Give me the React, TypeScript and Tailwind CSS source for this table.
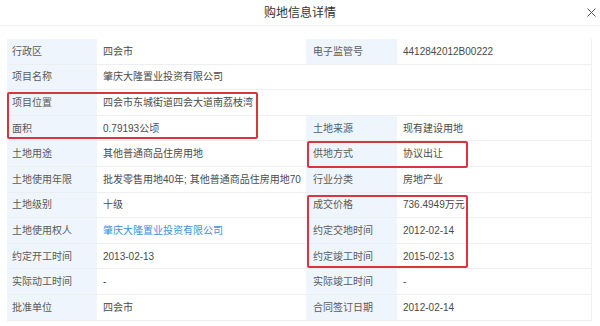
const rows: { l: string; v: string; l2?: string; v2?: string; link?: boolean }[] = [
  { l: '行政区', v: '四会市', l2: '电子监管号', v2: '4412842012B00222' },
  { l: '项目名称', v: '肇庆大隆置业投资有限公司' },
  { l: '项目位置', v: '四会市东城街道四会大道南荔枝湾' },
  { l: '面积', v: '0.79193公顷', l2: '土地来源', v2: '现有建设用地' },
  { l: '土地用途', v: '其他普通商品住房用地', l2: '供地方式', v2: '协议出让' },
  { l: '土地使用年限', v: '批发零售用地40年; 其他普通商品住房用地70', l2: '行业分类', v2: '房地产业' },
  { l: '土地级别', v: '十级', l2: '成交价格', v2: '736.4949万元' },
  { l: '土地使用权人', v: '肇庆大隆置业投资有限公司', l2: '约定交地时间', v2: '2012-02-14', link: true },
  { l: '约定开工时间', v: '2013-02-13', l2: '约定竣工时间', v2: '2015-02-13' },
  { l: '实际动工时间', v: '-', l2: '实际竣工时间', v2: '-' },
  { l: '批准单位', v: '四会市', l2: '合同签订日期', v2: '2012-02-14' },
];

export default function App() {
  return (
    <div
      className="w-[600px] h-[326px] overflow-hidden bg-white text-[#4a4a4a]"
      style={{ fontFamily: '"Liberation Sans", "Noto Sans CJK SC", sans-serif' }}
    >
      <div className="relative h-[26px] border-b border-[#f0f0f0] flex items-center justify-center">
        <span className="text-[12px] text-[#333]">购地信息详情</span>
        <svg className="absolute right-[4px] top-[8px]" width="9" height="9" viewBox="0 0 9 9">
          <path d="M0.5 0.5L8.5 8.5M8.5 0.5L0.5 8.5" stroke="#555" strokeWidth="1" />
        </svg>
      </div>
      <div className="relative ml-[7px] mt-[13px] w-[585px]">
        <div className="border-r border-[#f0f0f0]">
          {rows.map((r) => (
            <div
              key={r.l}
              className="grid grid-cols-[90px_209px_91px_195px] h-[25.6px] border-b border-[#eceff2] text-[10px]"
            >
              <div className="bg-[#eef5fc] flex items-center pl-[5px] text-[#5a5a5a]">{r.l}</div>
              {r.l2 ? (
                <>
                  <div className={`flex items-center pl-[6px] ${r.link ? 'text-[#3b8fdf]' : ''}`}>{r.v}</div>
                  <div className="bg-[#eef5fc] flex items-center pl-[7px] text-[#5a5a5a]">{r.l2}</div>
                  <div className="flex items-center pl-[6px]">{r.v2}</div>
                </>
              ) : (
                <div className="col-span-3 flex items-center pl-[6px]">{r.v}</div>
              )}
            </div>
          ))}
        </div>
        <div className="absolute left-0 top-[53px] w-[251px] h-[47px] border-2 border-[#d8353d] rounded-[2px]" />
        <div className="absolute left-[300px] top-[102px] w-[161px] h-[27px] border-2 border-[#d8353d] rounded-[2px]" />
        <div className="absolute left-[300px] top-[156px] w-[161px] h-[73px] border-2 border-[#d8353d] rounded-[2px]" />
      </div>
    </div>
  );
}
